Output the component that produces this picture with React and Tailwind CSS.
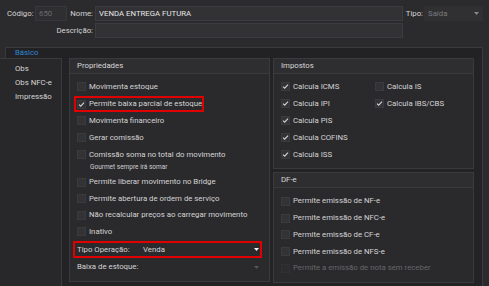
import React from "react";

// small dropdown arrow
const Caret = ({ color }) => (
  <svg width="5" height="3" viewBox="0 0 5 3" className="shrink-0">
    <path d="M0 0H5L2.5 3Z" fill={color} />
  </svg>
);

const Check = ({ checked = false, disabled = false }) => (
  <span
    className={`w-[9px] h-[9px] shrink-0 flex items-center justify-center border ${
      disabled ? "border-[#313134] bg-[#2c2c2f]" : "border-[#3b3b3f] bg-[#333336]"
    }`}
  >
    {checked && (
      <svg width="7" height="7" viewBox="0 0 7 7">
        <path d="M1 3.6L2.7 5.2L6 1.7" fill="none" stroke="#d4d4d4" strokeWidth="1.1" />
      </svg>
    )}
  </span>
);

const CheckRow = ({ label, checked, disabled, h = "h-[17px]" }) => (
  <div className={`${h} flex items-center gap-[3px] ${disabled ? "text-[#666668]" : ""}`}>
    <Check checked={checked} disabled={disabled} />
    <span className="whitespace-nowrap">{label}</span>
  </div>
);

const GroupBox = ({ title, className, children }) => (
  <div className={`border border-[#3a3a3d] bg-[#2a2a2d] ${className}`}>
    <div className="h-[15px] bg-[#2e2e31] border-b border-[#3a3a3d] flex items-center pl-[7px] text-[#d8d8d8]">
      {title}
    </div>
    {children}
  </div>
);

export default function App() {
  return (
    <div className="w-[489px] h-[286px] overflow-hidden bg-[#2b2b2d] font-[Roboto,sans-serif] text-[7.8px] leading-none text-[#d4d4d4]">
      {/* Cabeçalho */}
      <div className="pt-[6px]">
        <div className="flex items-center h-[15px]">
          <span className="w-[35px] pl-[7px]">Código:</span>
          <div className="w-[32px] h-full border border-[#38383c] bg-[#2f2f32] text-[#6c6c6c] flex items-center pl-[3px]">
            650
          </div>
          <span className="w-[28px] text-right pr-[2px]">Nome:</span>
          <div className="w-[308px] h-full border border-[#3c3c40] bg-[#323235] flex items-center pl-[3px] text-[#e6e6e6]">
            VENDA ENTREGA FUTURA
          </div>
          <span className="w-[21px] text-right pr-[1px]">Tipo:</span>
          <div className="w-[59px] h-full bg-[#303033] flex items-center justify-between pl-[4px] pr-[4px] text-[#7a7a7c]">
            Saída
            <Caret color="#88888a" />
          </div>
        </div>
        <div className="flex items-center h-[15px] mt-[2px]">
          <span className="w-[95px] text-right pr-[2px]">Descrição:</span>
          <div className="w-[308px] h-full border border-[#3c3c40] bg-[#323235]" />
        </div>
      </div>

      {/* Aba selecionada */}
      <div className="mt-[9px] ml-[5px] w-[478px] h-[11px] border-t border-l border-r border-[#3a3a3d] bg-[#222224] flex items-center pl-[9px] text-[#2f86d6]">
        Básico
      </div>

      <div className="flex h-[228px]">
        {/* Lista de abas */}
        <div className="w-[62px] bg-[#28282a] border-t border-r border-[#3a3a3d] pt-[3px] pl-[15px]">
          <div className="h-[14px] flex items-center">Obs</div>
          <div className="h-[14px] flex items-center">Obs NFC-e</div>
          <div className="h-[14px] flex items-center">Impressão</div>
        </div>

        {/* Conteúdo */}
        <div className="w-[421px] bg-[#232325] border-r border-[#3c3c3f] pl-[7px] pr-[8px] flex items-start gap-[3px]">
          <GroupBox title="Propriedades" className="w-[201px] h-[224px]">
            <div className="pt-[4px]">
              <div className="pl-[7px]">
                <CheckRow label="Movimenta estoque" />
              </div>
              <div className="h-[17px] flex items-end pl-[4px]">
                <div className="h-[16px] flex items-center gap-[3px] border-2 border-[#e10000] pl-[1px]">
                  <Check checked />
                  <span className="whitespace-nowrap">Permite baixa parcial de estoque</span>
                </div>
              </div>
              <div className="pl-[7px]">
                <CheckRow label="Movimenta financeiro" />
                <CheckRow label="Gerar comissão" />
                <CheckRow label="Comissão soma no total do movimento" />
              </div>
              <div className="h-[9px] flex items-center pl-[20px] text-[6.5px] text-[#cfcfcf]">
                Gourmet sempre irá somar
              </div>
              <div className="pl-[7px] mt-[2px]">
                <CheckRow label="Permite liberar movimento no Bridge" h="h-[16.5px]" />
                <CheckRow label="Permite abertura de ordem de serviço" h="h-[16.5px]" />
                <CheckRow label="Não recalcular preços ao carregar movimento" h="h-[16.5px]" />
                <CheckRow label="Inativo" h="h-[16.5px]" />
              </div>
              <div className="h-[18px] flex items-end pl-[3px] pr-[7px]">
                <div className="h-[17px] flex-1 border-2 border-[#e10000] flex items-center pl-[2px] pr-[1px]">
                  <span className="w-[66px]">Tipo Operação:</span>
                  <span className="flex-1">Venda</span>
                  <Caret color="#f2f2f2" />
                </div>
              </div>
              <div className="h-[18px] flex items-center pl-[7px] pr-[10px]">
                <span className="flex-1">Baixa de estoque:</span>
                <Caret color="#555558" />
              </div>
            </div>
          </GroupBox>

          <div className="w-[201px] flex flex-col gap-[3px]">
            <GroupBox title="Impostos" className="h-[111px]">
              <div className="pt-[4px] pl-[7px] flex">
                <div className="w-[94px]">
                  <CheckRow label="Calcula ICMS" checked />
                  <CheckRow label="Calcula IPI" checked />
                  <CheckRow label="Calcula PIS" checked />
                  <CheckRow label="Calcula COFINS" checked />
                  <CheckRow label="Calcula ISS" checked />
                </div>
                <div>
                  <CheckRow label="Calcula IS" />
                  <CheckRow label="Calcula IBS/CBS" checked />
                </div>
              </div>
            </GroupBox>

            <GroupBox title="DF-e" className="h-[111px]">
              <div className="pt-[5px] pl-[7px]">
                <CheckRow label="Permite emissão de NF-e" h="h-[16.75px]" />
                <CheckRow label="Permite emissão de NFC-e" h="h-[16.75px]" />
                <CheckRow label="Permite emissão de CF-e" h="h-[16.75px]" />
                <CheckRow label="Permite emissão de NFS-e" h="h-[16.75px]" />
                <CheckRow label="Permite a emissão de nota sem receber" h="h-[16.75px]" disabled />
              </div>
            </GroupBox>
          </div>
        </div>
      </div>
    </div>
  );
}
